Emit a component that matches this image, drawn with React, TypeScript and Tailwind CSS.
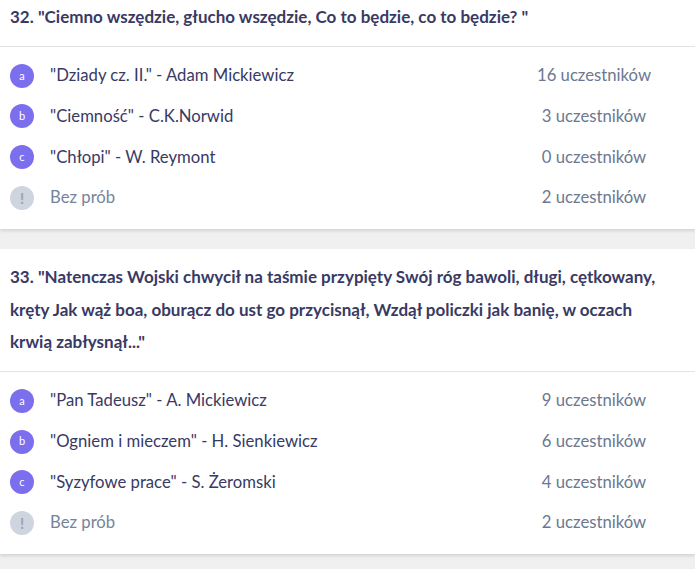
type Answer = { key: string; label: string; count: number };

type Question = { title: string; answers: Answer[]; none: number };

const questions: Question[] = [
  {
    title: '32. "Ciemno wszędzie, głucho wszędzie, Co to będzie, co to będzie? "',
    answers: [
      { key: 'a', label: '"Dziady cz. II." - Adam Mickiewicz', count: 16 },
      { key: 'b', label: '"Ciemność" - C.K.Norwid', count: 3 },
      { key: 'c', label: '"Chłopi" - W. Reymont', count: 0 },
    ],
    none: 2,
  },
  {
    title:
      '33. "Natenczas Wojski chwycił na taśmie przypięty Swój róg bawoli, długi, cętkowany, kręty Jak wąż boa, oburącz do ust go przycisnął, Wzdął policzki jak banię, w oczach krwią zabłysnął..."',
    answers: [
      { key: 'a', label: '"Pan Tadeusz" - A. Mickiewicz', count: 9 },
      { key: 'b', label: '"Ogniem i mieczem" - H. Sienkiewicz', count: 6 },
      { key: 'c', label: '"Syzyfowe prace" - S. Żeromski', count: 4 },
    ],
    none: 2,
  },
];

function Row({
  badge,
  label,
  count,
  muted,
}: {
  badge: string;
  label: string;
  count: number;
  muted?: boolean;
}) {
  return (
    <div className="flex items-center h-[40.67px] pl-[10px]">
      <span
        className={
          muted
            ? 'flex items-center justify-center w-6 h-6 rounded-full bg-[#cfd5de] text-[#9ba3b0] text-[15px] font-bold'
            : 'flex items-center justify-center w-6 h-6 rounded-full bg-[#7c6fee] text-white text-[11px]'
        }
      >
        {badge}
      </span>
      <span
        className={
          muted
            ? 'ml-4 flex-1 text-[16.7px] text-[#76849a]'
            : 'ml-4 flex-1 text-[16.7px] text-[#393a64]'
        }
      >
        {label}
      </span>
      <span className="w-[130px] mr-[36px] text-center text-[16.7px] text-[#6b7890]">
        {count} uczestników
      </span>
    </div>
  );
}

export default function App() {
  return (
    <div
      className="min-h-screen bg-[#f0f0f0] overflow-hidden"
      style={{ fontFamily: 'Lato, "Open Sans", sans-serif' }}
    >
      <div className="-mt-[11px] flex flex-col gap-5">
        {questions.map((q) => (
          <div key={q.title} className="bg-white shadow-[0_2px_3px_rgba(0,0,0,0.12)]">
            <div className="px-[10px] py-3 border-b border-[#e3e3e3]">
              <h2 className="text-[17px] leading-[32.5px] font-bold text-[#393a64] pr-4">
                {q.title}
              </h2>
            </div>
            <div className="pt-[9px] pb-[11px]">
              {q.answers.map((a) => (
                <Row key={a.key} badge={a.key} label={a.label} count={a.count} />
              ))}
              <Row badge="!" label="Bez prób" count={q.none} muted />
            </div>
          </div>
        ))}
      </div>
    </div>
  );
}
